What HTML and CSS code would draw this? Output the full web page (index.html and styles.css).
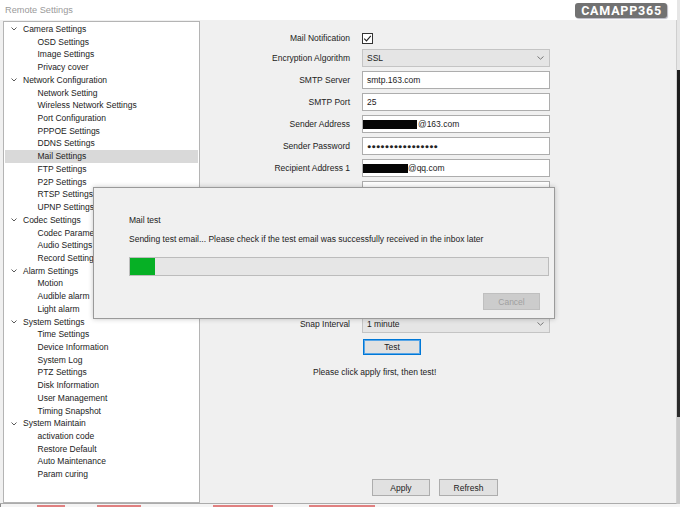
FILE: index.html
```html
<!DOCTYPE html>
<html lang="en">
<head>
    <meta charset="UTF-8">
    <meta name="viewport" content="width=device-width, initial-scale=1.0">
    <title>Remote Settings</title>
    <link rel="stylesheet" href="styles.css">
</head>
<body>
    <div class="screen">
        <div class="window">
            <div class="titlebar">
                <span class="title">Remote Settings</span>
                <span class="brand">CAMAPP365</span>
            </div>
            <div class="main">
                <ul class="tree">
                    <li class="group"><svg class="chev" width="6" height="4" viewBox="0 0 6 4"><path d="M0.5 0.5 3 3 5.5 0.5" /></svg>Camera Settings</li>
                    <li class="leaf">OSD Settings</li>
                    <li class="leaf">Image Settings</li>
                    <li class="leaf">Privacy cover</li>
                    <li class="group"><svg class="chev" width="6" height="4" viewBox="0 0 6 4"><path d="M0.5 0.5 3 3 5.5 0.5" /></svg>Network Configuration</li>
                    <li class="leaf">Network Setting</li>
                    <li class="leaf">Wireless Network Settings</li>
                    <li class="leaf">Port Configuration</li>
                    <li class="leaf">PPPOE Settings</li>
                    <li class="leaf">DDNS Settings</li>
                    <li class="leaf selected">Mail Settings</li>
                    <li class="leaf">FTP Settings</li>
                    <li class="leaf">P2P Settings</li>
                    <li class="leaf">RTSP Settings</li>
                    <li class="leaf">UPNP Settings</li>
                    <li class="group"><svg class="chev" width="6" height="4" viewBox="0 0 6 4"><path d="M0.5 0.5 3 3 5.5 0.5" /></svg>Codec Settings</li>
                    <li class="leaf">Codec Parameters</li>
                    <li class="leaf">Audio Settings</li>
                    <li class="leaf">Record Settings</li>
                    <li class="group"><svg class="chev" width="6" height="4" viewBox="0 0 6 4"><path d="M0.5 0.5 3 3 5.5 0.5" /></svg>Alarm Settings</li>
                    <li class="leaf">Motion</li>
                    <li class="leaf">Audible alarm</li>
                    <li class="leaf">Light alarm</li>
                    <li class="group"><svg class="chev" width="6" height="4" viewBox="0 0 6 4"><path d="M0.5 0.5 3 3 5.5 0.5" /></svg>System Settings</li>
                    <li class="leaf">Time Settings</li>
                    <li class="leaf">Device Information</li>
                    <li class="leaf">System Log</li>
                    <li class="leaf">PTZ Settings</li>
                    <li class="leaf">Disk Information</li>
                    <li class="leaf">User Management</li>
                    <li class="leaf">Timing Snapshot</li>
                    <li class="group"><svg class="chev" width="6" height="4" viewBox="0 0 6 4"><path d="M0.5 0.5 3 3 5.5 0.5" /></svg>System Maintain</li>
                    <li class="leaf">activation code</li>
                    <li class="leaf">Restore Default</li>
                    <li class="leaf">Auto Maintenance</li>
                    <li class="leaf">Param curing</li>
                </ul>

                <div class="content">
                    <div class="form">
                        <label class="lbl lbl-check">Mail Notification</label>
                        <div class="check-cell">
                            <span class="checkbox"><svg width="9" height="9" viewBox="0 0 9 9"><path d="M1.2 4.6 3.5 6.9 7.8 1.8" /></svg></span>
                        </div>

                        <label class="lbl">Encryption Algorithm</label>
                        <div class="select"><span>SSL</span><svg class="sel-chev" width="7" height="4" viewBox="0 0 7 4"><path d="M0.5 0.5 3.5 3.2 6.5 0.5" /></svg></div>

                        <label class="lbl">SMTP Server</label>
                        <div class="input">smtp.163.com</div>

                        <label class="lbl">SMTP Port</label>
                        <div class="input">25</div>

                        <label class="lbl">Sender Address</label>
                        <div class="input"><span class="redact r-sender"></span>@163.com</div>

                        <label class="lbl">Sender Password</label>
                        <div class="input dots">&#9679;&#9679;&#9679;&#9679;&#9679;&#9679;&#9679;&#9679;&#9679;&#9679;&#9679;&#9679;&#9679;&#9679;&#9679;&#9679;</div>

                        <label class="lbl">Recipient Address 1</label>
                        <div class="input"><span class="redact r-recipient"></span>@qq.com</div>

                        <!-- rows below are hidden behind the mail test dialog -->
                        <label class="lbl"></label>
                        <div class="input"></div>

                        <label class="lbl"></label>
                        <div class="input"></div>

                        <label class="lbl"></label>
                        <div class="input"></div>

                        <label class="lbl"></label>
                        <div class="input"></div>

                        <label class="lbl"></label>
                        <div class="check-cell"><span class="checkbox"></span></div>

                        <label class="lbl"></label>
                        <div class="select"></div>

                        <label class="lbl snap">Snap Interval</label>
                        <div class="select snap"><span>1 minute</span><svg class="sel-chev" width="7" height="4" viewBox="0 0 7 4"><path d="M0.5 0.5 3.5 3.2 6.5 0.5" /></svg></div>
                    </div>

                    <div class="test-row"><button class="btn btn-test">Test</button></div>
                    <p class="hint">Please click apply first, then test!</p>

                    <div class="actions">
                        <button class="btn btn-apply">Apply</button>
                        <button class="btn btn-refresh">Refresh</button>
                    </div>
                </div>
            </div>
        </div>
        <div class="edge"></div>
    </div>

    <div class="below">
        <span class="red-mark m1"></span>
        <span class="red-mark m2"></span>
        <span class="red-mark m3"></span>
        <span class="red-mark m4"></span>
    </div>

    <div class="dialog">
        <p class="dlg-title">Mail test</p>
        <p class="dlg-msg">Sending test email... Please check if the test email was successfully received in the inbox later</p>
        <div class="progress"><div class="progress-fill"></div></div>
        <div class="dlg-foot"><button class="btn btn-cancel" disabled>Cancel</button></div>
    </div>
</body>
</html>
```

FILE: styles.css
```css
* {
    box-sizing: border-box;
}

body {
    margin: 0;
    width: 680px;
    height: 507px;
    overflow: hidden;
    font-family: "Liberation Sans", Arial, sans-serif;
    font-size: 8.5px;
    color: #222222;
    background-color: #d8d8d8;
    position: relative;
}

.screen {
    display: flex;
    height: 504px;
}

.window {
    width: 677px;
    display: flex;
    flex-direction: column;
}

.edge {
    width: 3px;
    background: linear-gradient(#e6e6e6 0, #e6e6e6 70px, #1c1c1c 70px, #2a2a2a 417px, #c8c8c8 417px);
}

/* title bar */
.titlebar {
    height: 20px;
    background-color: #ffffff;
    display: flex;
    align-items: center;
    justify-content: space-between;
    padding: 0 10px 0 5px;
}

.title {
    font-size: 9.2px;
    color: #9a9a9a;
}

.brand {
    font-family: Roboto, "Liberation Sans", sans-serif;
    font-weight: 700;
    font-size: 12.5px;
    letter-spacing: 0.8px;
    color: #ffffff;
    background-color: #727272;
    border-radius: 3px;
    padding: 0 5px 0 6px;
    line-height: 15px;
    margin-top: 1px;
    box-shadow: 1px 1px 1px #b9b9c4;
}

/* main body */
.main {
    flex: 1;
    display: flex;
    background-color: #f0f0f0;
    border-bottom: 1px solid #ababab;
    border-right: 1px solid #cfcfcf;
}

.tree {
    list-style: none;
    margin: 1px 0 0 3px;
    padding: 1px 0 0 0;
    width: 197px;
    background-color: #ffffff;
    border: 1px solid #b4b4b4;
}

.tree li {
    height: 12.72px;
    line-height: 12.72px;
    white-space: nowrap;
}

.group {
    display: flex;
    align-items: center;
}

.chev {
    margin: 0 6px 0 7px;
    fill: none;
    stroke: #5a5a5a;
    stroke-width: 1;
}

.leaf {
    padding-left: 33.5px;
}

.selected {
    background-color: #d9d9d9;
    margin: 0 1px;
    padding-left: 32.5px;
}

/* form */
.content {
    flex: 1;
    display: flex;
    flex-direction: column;
    padding: 7px 0 7px 0;
}

.form {
    display: grid;
    grid-template-columns: 150px 188px;
    column-gap: 12px;
    grid-auto-rows: 22px;
}

.lbl {
    text-align: right;
    line-height: 18px;
    white-space: nowrap;
}

.lbl-check {
    line-height: 23px;
}

.check-cell {
    display: flex;
    align-items: center;
    height: 22px;
}

.checkbox {
    width: 11px;
    height: 11px;
    border: 1px solid #333333;
    background-color: #ffffff;
    display: flex;
    align-items: center;
    justify-content: center;
}

.checkbox svg {
    fill: none;
    stroke: #222222;
    stroke-width: 1.1;
}

.input,
.select {
    height: 18px;
    border: 1px solid #adadad;
    background-color: #ffffff;
    padding-left: 4px;
    display: flex;
    align-items: center;
    white-space: nowrap;
    overflow: hidden;
}

.select {
    background-color: #e5e5e5;
    border-color: #c4c4c4;
    justify-content: space-between;
    padding-right: 5px;
}

.sel-chev {
    fill: none;
    stroke: #777777;
    stroke-width: 1;
}

.snap {
    margin-top: 2px;
}

.dots {
    font-size: 7.2px;
    letter-spacing: 0.1px;
}

.redact {
    display: inline-block;
    height: 9px;
    background-color: #050505;
}

.r-sender {
    width: 54px;
    margin: 0 1px 0 -4px;
}

.r-recipient {
    width: 47px;
    margin-left: -6px;
}

.btn {
    font-family: inherit;
    font-size: 8.5px;
    color: #222222;
    background-color: #e1e1e1;
    border: 1px solid #adadad;
    padding: 0;
}

.test-row {
    padding-left: 163px;
    margin-top: 4px;
}

.btn-test {
    width: 58px;
    height: 16px;
    border: 1px solid #0078d7;
    box-shadow: inset 0 0 0 1px #5aa6e6;
}

.hint {
    margin: 11px 0 0 113px;
    line-height: 12px;
}

.actions {
    margin-top: auto;
    padding-left: 172px;
    display: flex;
    gap: 9px;
}

.btn-apply {
    width: 58px;
    height: 17px;
}

.btn-refresh {
    width: 59px;
    height: 17px;
}

/* strip of the window behind */
.below {
    height: 3px;
    display: flex;
    align-items: flex-end;
    background-color: #f4f4f4;
    border-left: 1px solid #8a8a8a;
}

.red-mark {
    height: 2px;
    background-color: #e08080;
}

.m1 { margin-left: 36px; width: 28px; }
.m2 { margin-left: 32px; width: 44px; }
.m3 { margin-left: 72px; width: 60px; }
.m4 { margin-left: 36px; width: 66px; }

/* modal dialog over the form */
.dialog {
    position: absolute;
    left: 93px;
    top: 187px;
    width: 462px;
    height: 132px;
    background-color: #f0f0f0;
    border: 1px solid #9a9a9a;
    box-shadow: 0 0 5px rgba(0, 0, 0, 0.22);
    padding: 0 5px 0 35px;
}

.dlg-title {
    margin: 26px 0 0 0;
    line-height: 12px;
}

.dlg-msg {
    margin: 7px 0 0 0;
    line-height: 12px;
    white-space: nowrap;
}

.progress {
    margin-top: 12px;
    height: 19px;
    background-color: #e6e6e6;
    border: 1px solid #bcbcbc;
}

.progress-fill {
    width: 25px;
    height: 100%;
    background-color: #06b025;
}

.dlg-foot {
    display: flex;
    justify-content: flex-end;
    margin-top: 17px;
    padding-right: 9px;
}

.btn-cancel {
    width: 57px;
    height: 17px;
    background-color: #cccccc;
    border-color: #bfbfbf;
    color: #a0a0a0;
}
```
